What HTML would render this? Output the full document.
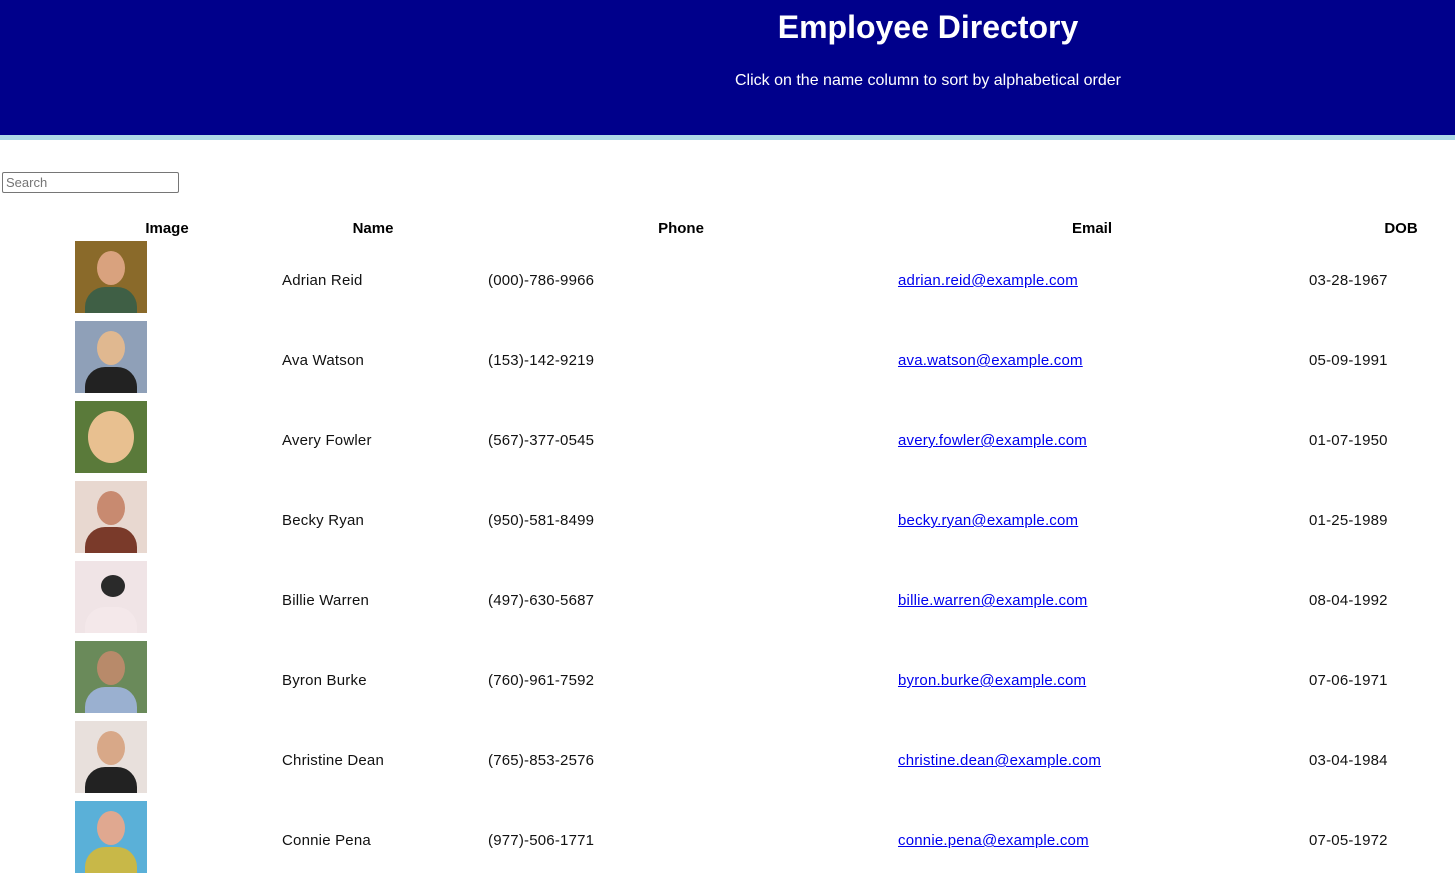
<!DOCTYPE html>
<html><head><meta charset="utf-8"><style>
body{margin:0;width:1455px;height:878px;overflow:hidden;font-family:"Liberation Sans",sans-serif;background:#fff;position:relative}
.hd{position:absolute;left:0;top:0;width:1455px;height:135px;background:#00008b;border-bottom:5px solid #add8e6}
.t{position:absolute;left:728px;width:400px;text-align:center;color:#fff}
.s{position:absolute;left:2px;top:172px;border:1px solid #767676;border-radius:2px;font-size:13px;color:#757575;line-height:19px;padding-left:3px;box-sizing:border-box;width:177px;height:21px}
.h{position:absolute;top:220px;font-weight:bold;font-size:15px;transform:translateX(-50%)}
.c{position:absolute;font-size:15px;color:#111;letter-spacing:0.2px}
a{color:#00e;text-decoration:underline}
.im{position:absolute;left:75px;width:72px;height:72px;overflow:hidden}
.im i{position:absolute;left:22px;top:10px;width:28px;height:34px;border-radius:50%;background:#d9a27e}
.im b{position:absolute;left:10px;top:46px;width:52px;height:30px;border-radius:20px 20px 0 0}
</style></head><body>
<div class="hd"></div>
<div class="t" style="top:9px;font-size:32px;font-weight:bold">Employee Directory</div>
<div class="t" style="top:72px;font-size:16px">Click on the name column to sort by alphabetical order</div>
<div class="s">Search</div>
<div class="h" style="left:167px">Image</div>
<div class="h" style="left:373px">Name</div>
<div class="h" style="left:681px">Phone</div>
<div class="h" style="left:1092px">Email</div>
<div class="h" style="left:1401px">DOB</div>

<div class="im" style="top:241px;background:#8a6a2a"><i></i><b style="background:#3f5f45"></b></div>
<div class="im" style="top:321px;background:#8fa0b8"><i style="background:#e0b890"></i><b style="background:#222"></b></div>
<div class="im" style="top:401px;background:#5a7a3a"><i style="width:46px;left:13px;height:52px;background:#e8c090"></i></div>
<div class="im" style="top:481px;background:#e8d8d0"><i style="background:#c88a70"></i><b style="background:#7a3a2a"></b></div>
<div class="im" style="top:561px;background:#f0e4e6"><i style="background:#2a2a2a;width:24px;height:22px;left:26px;top:14px"></i><b style="background:#f4e8ea"></b></div>
<div class="im" style="top:641px;background:#6a8a5a"><i style="background:#b88a6a"></i><b style="background:#9ab0d0"></b></div>
<div class="im" style="top:721px;background:#e8e0dc"><i style="background:#d8a888"></i><b style="background:#222"></b></div>
<div class="im" style="top:801px;background:#5ab0d8"><i style="background:#e0a890"></i><b style="background:#c8b848"></b></div>

<div class="c" style="left:282px;top:272px">Adrian Reid</div><div class="c" style="left:488px;top:272px">(000)-786-9966</div><div class="c" style="left:898px;top:272px"><a>adrian.reid@example.com</a></div><div class="c" style="left:1309px;top:272px">03-28-1967</div>
<div class="c" style="left:282px;top:352px">Ava Watson</div><div class="c" style="left:488px;top:352px">(153)-142-9219</div><div class="c" style="left:898px;top:352px"><a>ava.watson@example.com</a></div><div class="c" style="left:1309px;top:352px">05-09-1991</div>
<div class="c" style="left:282px;top:432px">Avery Fowler</div><div class="c" style="left:488px;top:432px">(567)-377-0545</div><div class="c" style="left:898px;top:432px"><a>avery.fowler@example.com</a></div><div class="c" style="left:1309px;top:432px">01-07-1950</div>
<div class="c" style="left:282px;top:512px">Becky Ryan</div><div class="c" style="left:488px;top:512px">(950)-581-8499</div><div class="c" style="left:898px;top:512px"><a>becky.ryan@example.com</a></div><div class="c" style="left:1309px;top:512px">01-25-1989</div>
<div class="c" style="left:282px;top:592px">Billie Warren</div><div class="c" style="left:488px;top:592px">(497)-630-5687</div><div class="c" style="left:898px;top:592px"><a>billie.warren@example.com</a></div><div class="c" style="left:1309px;top:592px">08-04-1992</div>
<div class="c" style="left:282px;top:672px">Byron Burke</div><div class="c" style="left:488px;top:672px">(760)-961-7592</div><div class="c" style="left:898px;top:672px"><a>byron.burke@example.com</a></div><div class="c" style="left:1309px;top:672px">07-06-1971</div>
<div class="c" style="left:282px;top:752px">Christine Dean</div><div class="c" style="left:488px;top:752px">(765)-853-2576</div><div class="c" style="left:898px;top:752px"><a>christine.dean@example.com</a></div><div class="c" style="left:1309px;top:752px">03-04-1984</div>
<div class="c" style="left:282px;top:832px">Connie Pena</div><div class="c" style="left:488px;top:832px">(977)-506-1771</div><div class="c" style="left:898px;top:832px"><a>connie.pena@example.com</a></div><div class="c" style="left:1309px;top:832px">07-05-1972</div>
</body></html>
